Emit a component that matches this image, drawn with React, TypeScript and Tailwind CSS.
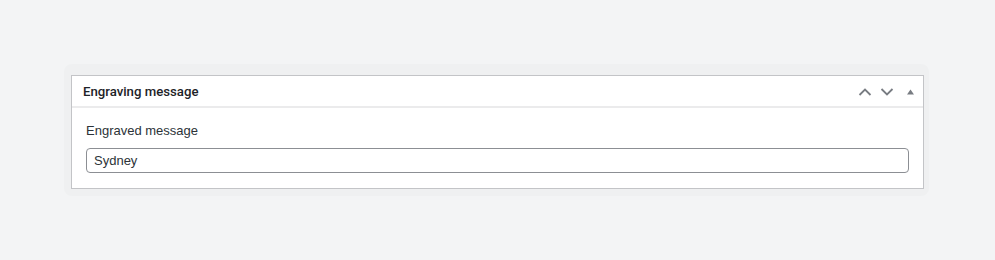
import React from "react";

const App = () => {
  return (
    <div className="w-[995px] h-[260px] bg-[#f3f4f5] pt-[64px] pl-[64px] font-['Liberation_Sans',Arial,sans-serif] text-[#1d2327]">
      {/* outer panel */}
      <div className="w-[865px] rounded-lg bg-[#eff0f1] pl-[7px] pr-[5px] pt-[11px] pb-[7px]">
        <div className="bg-white border border-[#c3c4c7]">
          {/* header */}
          <div className="h-[32px] flex items-center justify-between pl-[11px] pr-[9px] border-b-2 border-[#ebebec]">
            <h2 className="text-[13.2px] font-medium font-['Roboto','Liberation_Sans',sans-serif] pt-[1px]">Engraving message</h2>
            <div className="flex items-center text-[#787c82] pt-[2px]">
              <svg width="14" height="8" viewBox="0 0 14 8" fill="none">
                <path d="M1.5 7 L7 1.5 L12.5 7" stroke="currentColor" strokeWidth="1.8" />
              </svg>
              <svg width="14" height="8" viewBox="0 0 14 8" fill="none" className="ml-[8px]">
                <path d="M1.5 1 L7 6.5 L12.5 1" stroke="currentColor" strokeWidth="1.8" />
              </svg>
              <svg width="7" height="6" viewBox="0 0 7 6" className="ml-[13px]">
                <path d="M0 5.5 L3.5 0.5 L7 5.5 Z" fill="currentColor" />
              </svg>
            </div>
          </div>
          {/* body */}
          <div className="px-[14px] pt-[14px] pb-[15px]">
            <label className="block text-[13px] text-[#2c3338] leading-[18px]">Engraved message</label>
            <input
              type="text"
              defaultValue="Sydney"
              className="mt-[8px] w-full h-[25px] rounded-[4px] border border-[#8c8f94] px-[7px] text-[13px] text-[#2c3338] outline-none"
            />
          </div>
        </div>
      </div>
    </div>
  );
};

export default App;
